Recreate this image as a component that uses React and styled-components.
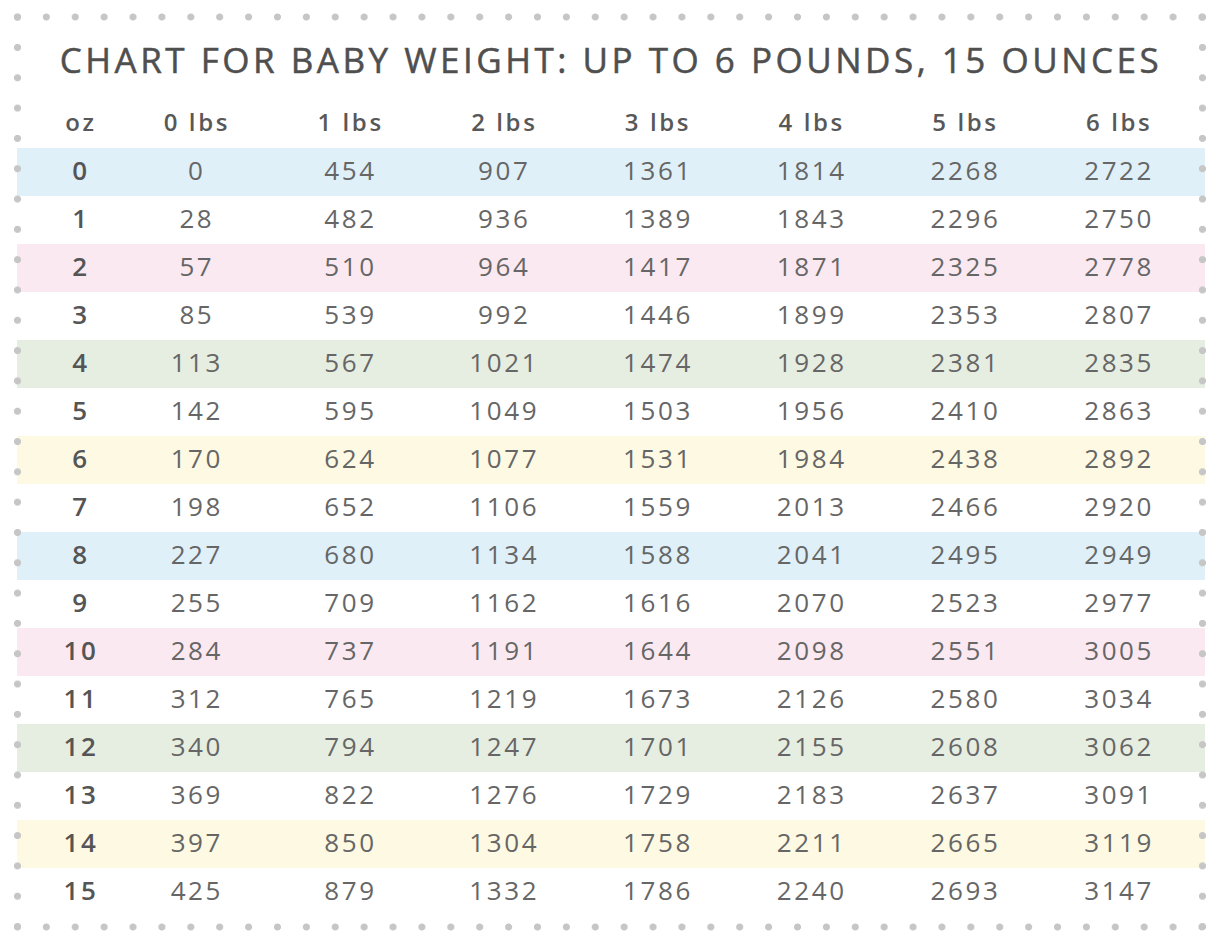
import React from "react";
import styled, { createGlobalStyle } from "styled-components";

const Global = createGlobalStyle`
  html, body { margin: 0; padding: 0; background: #ffffff; }
  body { font-family: "Open Sans", "Liberation Sans", sans-serif; }
`;

const DOT = "radial-gradient(circle, #c6c6c6 3.2px, rgba(198,198,198,0) 3.9px)";

const Page = styled.div`
  width: 1222px;
  height: 942px;
  padding: 2px 5px 0 3px;
  box-sizing: border-box;
  overflow: hidden;
`;

const Card = styled.div`
  position: relative;
  width: 1214px;
  height: 940px;
  box-sizing: border-box;
  padding: 38px 12px 0 14px;
  &::after {
    content: "";
    position: absolute;
    inset: 0;
    pointer-events: none;
    background-image: ${DOT}, ${DOT}, ${DOT}, ${DOT};
    background-size: 28.9px 30.32px;
    background-repeat: round no-repeat, round no-repeat, no-repeat round, no-repeat round;
    background-position: left top, left bottom, left top, right top;
  }
`;

const Title = styled.h1`
  margin: 0 0 20px;
  height: 40px;
  line-height: 40px;
  text-align: center;
  font-family: "Open Sans", sans-serif;
  font-weight: 400;
  font-size: 35px;
  letter-spacing: 3.5px;
  color: #4f4f4f;
  white-space: nowrap;
  -webkit-text-stroke: 0.5px #4f4f4f;
`;

const Row = styled.div`
  display: grid;
  grid-template-columns: 78px repeat(7, 1fr);
  align-items: center;
  height: 48px;
  box-sizing: border-box;
  padding: 0 10px 5px 24px;
  background: ${(p) => p.$bg || "transparent"};
`;

const HeadCell = styled.div`
  text-align: center;
  font-size: 24px;
  font-weight: 600;
  color: #585858;
  letter-spacing: 2.6px;
  padding-left: 2px;
`;

const Cell = styled.div`
  text-align: center;
  font-size: 26px;
  font-weight: ${(p) => (p.$strong ? 600 : 400)};
  color: ${(p) => (p.$strong ? "#555555" : "#666666")};
  letter-spacing: 2.6px;
  padding-left: 2px;
`;

const bands = ["#e0f0f9", null, "#fbe9f1", null, "#e6eee2", null, "#fdf9e3", null];

const data = [
  [0, 454, 907, 1361, 1814, 2268, 2722],
  [28, 482, 936, 1389, 1843, 2296, 2750],
  [57, 510, 964, 1417, 1871, 2325, 2778],
  [85, 539, 992, 1446, 1899, 2353, 2807],
  [113, 567, 1021, 1474, 1928, 2381, 2835],
  [142, 595, 1049, 1503, 1956, 2410, 2863],
  [170, 624, 1077, 1531, 1984, 2438, 2892],
  [198, 652, 1106, 1559, 2013, 2466, 2920],
  [227, 680, 1134, 1588, 2041, 2495, 2949],
  [255, 709, 1162, 1616, 2070, 2523, 2977],
  [284, 737, 1191, 1644, 2098, 2551, 3005],
  [312, 765, 1219, 1673, 2126, 2580, 3034],
  [340, 794, 1247, 1701, 2155, 2608, 3062],
  [369, 822, 1276, 1729, 2183, 2637, 3091],
  [397, 850, 1304, 1758, 2211, 2665, 3119],
  [425, 879, 1332, 1786, 2240, 2693, 3147],
];

const heads = ["oz", "0 lbs", "1 lbs", "2 lbs", "3 lbs", "4 lbs", "5 lbs", "6 lbs"];

export default function App() {
  return (
    <Page>
      <Global />
      <Card>
        <Title>CHART FOR BABY WEIGHT: UP TO 6 POUNDS, 15 OUNCES</Title>
        <Row>
          {heads.map((h) => (
            <HeadCell key={h}>{h}</HeadCell>
          ))}
        </Row>
        {data.map((r, i) => (
          <Row key={i} $bg={bands[i % 8]}>
            <Cell $strong>{i}</Cell>
            {r.map((v, j) => (
              <Cell key={j}>{v}</Cell>
            ))}
          </Row>
        ))}
      </Card>
    </Page>
  );
}
